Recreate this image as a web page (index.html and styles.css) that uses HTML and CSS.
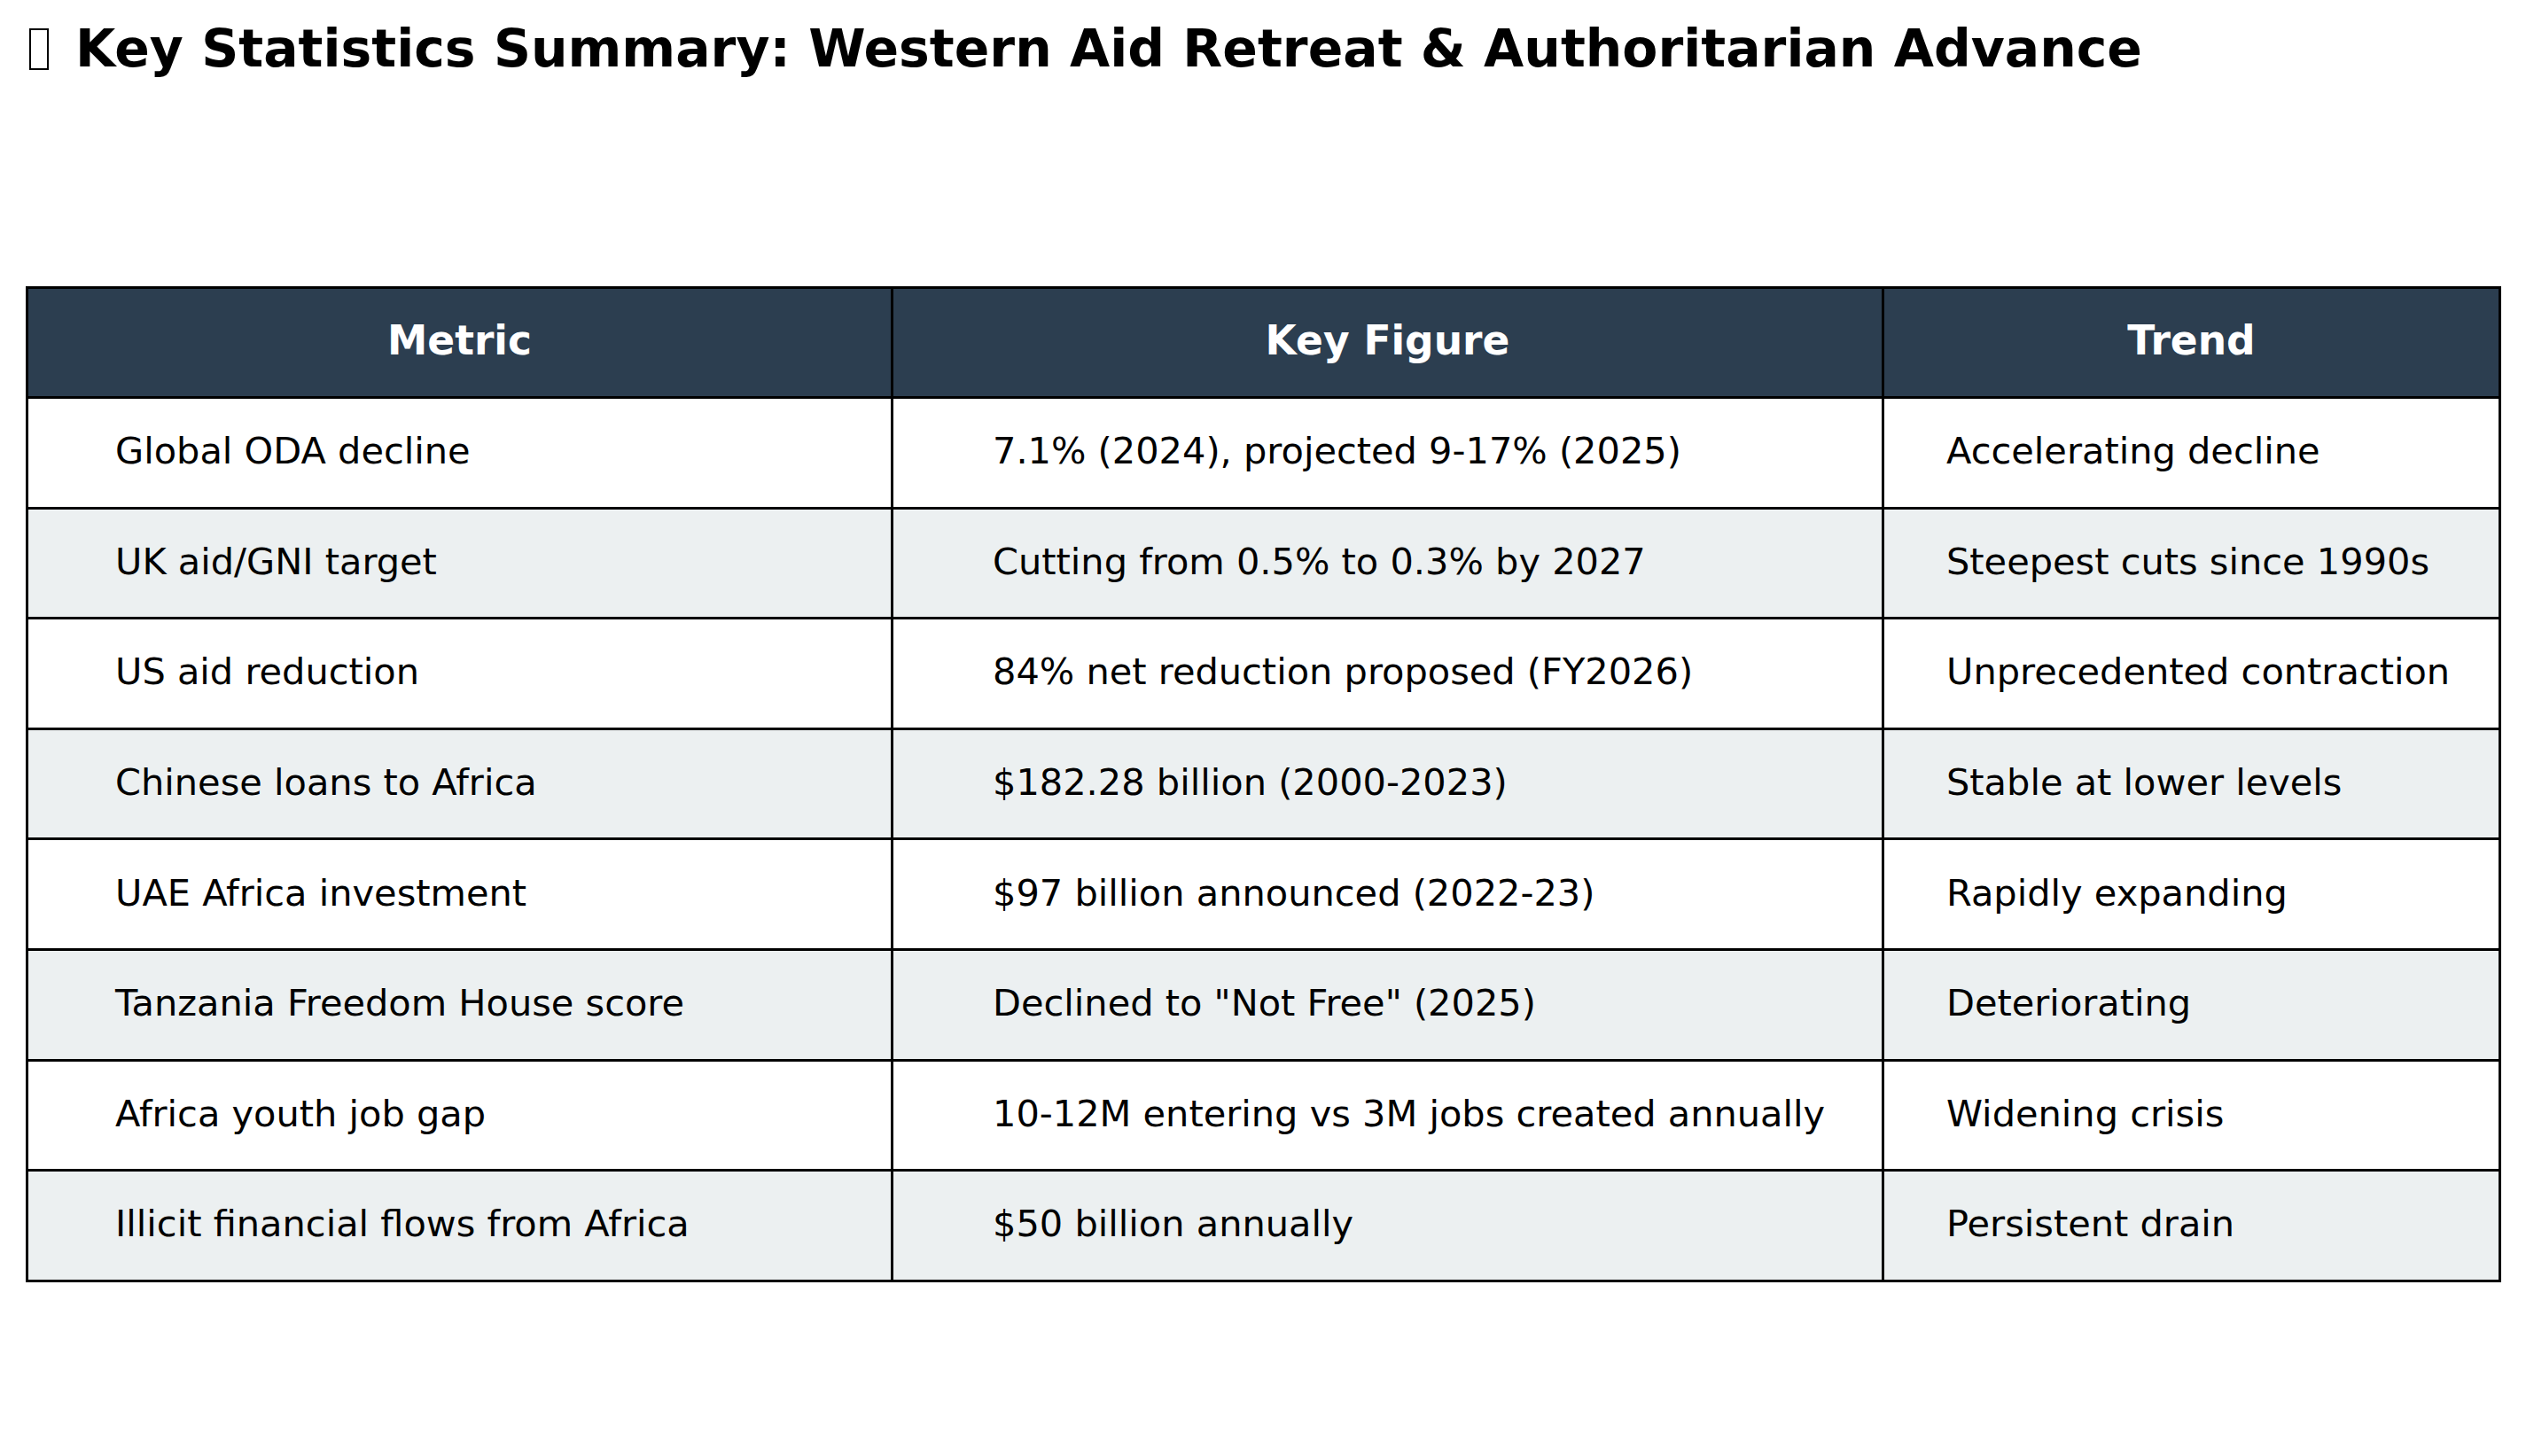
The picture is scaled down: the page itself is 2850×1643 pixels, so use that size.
FILE: index.html
```html
<!DOCTYPE html>
<html>
<head>
<meta charset="utf-8">
<link rel="stylesheet" href="styles.css">
</head>
<body>
<div class="page">
  <h1 class="title"><span class="tofu"></span><span>Key Statistics Summary: Western Aid Retreat &amp; Authoritarian Advance</span></h1>
  <table class="stats">
    <colgroup>
      <col class="c1"><col class="c2"><col class="c3">
    </colgroup>
    <thead>
      <tr><th>Metric</th><th>Key Figure</th><th>Trend</th></tr>
    </thead>
    <tbody>
      <tr><td class="p1">Global ODA decline</td><td class="p2">7.1% (2024), projected 9-17% (2025)</td><td class="p3">Accelerating decline</td></tr>
      <tr class="alt"><td class="p1">UK aid/GNI target</td><td class="p2">Cutting from 0.5% to 0.3% by 2027</td><td class="p3">Steepest cuts since 1990s</td></tr>
      <tr><td class="p1">US aid reduction</td><td class="p2">84% net reduction proposed (FY2026)</td><td class="p3">Unprecedented contraction</td></tr>
      <tr class="alt"><td class="p1">Chinese loans to Africa</td><td class="p2">$182.28 billion (2000-2023)</td><td class="p3">Stable at lower levels</td></tr>
      <tr><td class="p1">UAE Africa investment</td><td class="p2">$97 billion announced (2022-23)</td><td class="p3">Rapidly expanding</td></tr>
      <tr class="alt"><td class="p1">Tanzania Freedom House score</td><td class="p2">Declined to "Not Free" (2025)</td><td class="p3">Deteriorating</td></tr>
      <tr><td class="p1">Africa youth job gap</td><td class="p2">10-12M entering vs 3M jobs created annually</td><td class="p3">Widening crisis</td></tr>
      <tr class="alt"><td class="p1">Illicit financial flows from Africa</td><td class="p2">$50 billion annually</td><td class="p3">Persistent drain</td></tr>
    </tbody>
  </table>
</div>
</body>
</html>
```
FILE: styles.css
```css
html, body {
  margin: 0;
  padding: 0;
  background: #ffffff;
}
.page {
  width: 2850px;
  height: 1643px;
  font-family: "DejaVu Sans", sans-serif;
  color: #000;
  overflow: hidden;
}
.title {
  margin: 0;
  padding: 22px 0 0 33px;
  display: flex;
  align-items: center;
  gap: 30px;
  font-size: 58.4px;
  font-weight: bold;
  line-height: 66px;
}
.tofu {
  display: inline-block;
  width: 22px;
  height: 47px;
  border: 2px solid #000;
  box-sizing: border-box;
}
.stats {
  margin: 235px 0 0 29px;
  width: 2790px;
  border-collapse: collapse;
  table-layout: fixed;
  font-size: 41.5px;
}
.c1 { width: 976px; }
.c2 { width: 1118px; }
.c3 { width: 696px; }
.stats th, .stats td {
  border: 3px solid #000;
  box-sizing: border-box;
  padding: 0 0 4px 0;
  white-space: nowrap;
}
.stats th {
  height: 124px;
  font-size: 45.5px;
  background: #2c3e50;
  color: #fff;
  font-weight: bold;
  text-align: center;
}
.stats td {
  height: 124.6px;
  background: #fff;
  text-align: left;
}
.stats tr.alt td {
  background: #ecf0f1;
}
.p1 { padding-left: 98px !important; }
.p2 { padding-left: 112px !important; }
.p3 { padding-left: 70px !important; }
```
